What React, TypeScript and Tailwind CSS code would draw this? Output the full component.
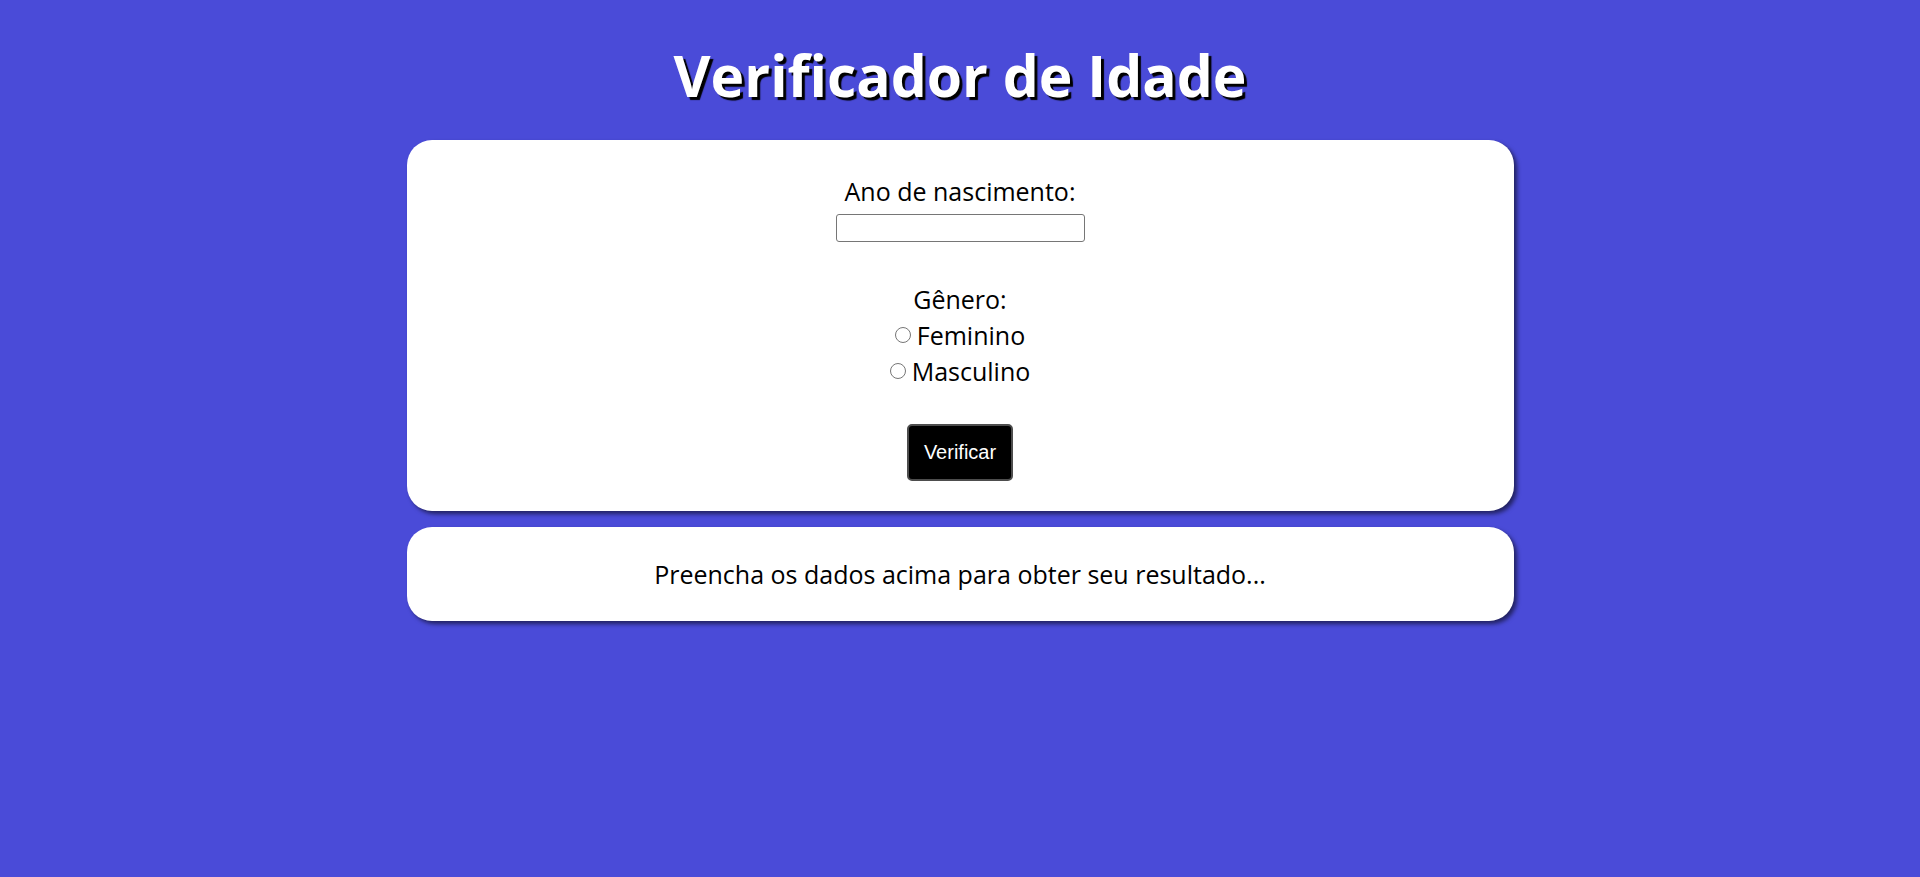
import { useState } from 'react';

export default function App() {
  const [ano, setAno] = useState('');
  const [genero, setGenero] = useState('');
  const [resultado, setResultado] = useState('Preencha os dados acima para obter seu resultado...');

  const verificar = () => {
    const nasc = Number(ano);
    const atual = new Date().getFullYear();
    if (!ano || nasc > atual || nasc <= 0) {
      setResultado('Verifique os dados e tente novamente!');
      return;
    }
    const idade = atual - nasc;
    setResultado(`Detectamos ${genero || 'alguém'} com ${idade} anos.`);
  };

  return (
    <div className="min-h-screen w-full bg-[#4a4bd8] font-['Open_Sans',sans-serif] text-black">
      {/* título */}
      <header className="pt-[35px] pb-[25px] text-center">
        <h1 className="text-[57px] leading-[80px] font-bold text-white [text-shadow:3px_3px_1px_#000000]">
          Verificador de Idade
        </h1>
      </header>

      <main className="mx-auto flex w-[1107px] flex-col gap-4">
        {/* formulário */}
        <section className="flex flex-col items-center rounded-[25px] bg-white px-[30px] pt-[33px] pb-[30px] text-[25px] leading-[36px] shadow-[3px_3px_4px_rgba(0,0,0,0.55)]">
          <label htmlFor="ano">Ano de nascimento:</label>
          <input
            id="ano"
            type="number"
            value={ano}
            onChange={(e) => setAno(e.target.value)}
            className="mt-[5px] h-[28px] w-[249px] rounded-[3px] border border-[#767676] bg-white px-1 text-base outline-none"
          />

          <p className="mt-[39px]">Gênero:</p>
          <label className="flex items-center gap-[6px]">
            <input
              type="radio"
              name="genero"
              value="uma mulher"
              onChange={(e) => setGenero(e.target.value)}
              className="h-[16px] w-[16px] accent-[#767676]"
            />
            Feminino
          </label>
          <label className="flex items-center gap-[6px]">
            <input
              type="radio"
              name="genero"
              value="um homem"
              onChange={(e) => setGenero(e.target.value)}
              className="h-[16px] w-[16px] accent-[#767676]"
            />
            Masculino
          </label>

          <button
            type="button"
            onClick={verificar}
            className="mt-[35px] rounded-[5px] border-2 border-[#4d4d4d] bg-black px-[15px] py-[15px] font-['Liberation_Sans',Arial,sans-serif] text-[20px] leading-[23px] text-white"
          >
            Verificar
          </button>
        </section>

        {/* resultado */}
        <section className="rounded-[25px] bg-white py-[29px] text-center text-[25px] leading-[36px] shadow-[3px_3px_4px_rgba(0,0,0,0.55)]">
          {resultado}
        </section>
      </main>
    </div>
  );
}
